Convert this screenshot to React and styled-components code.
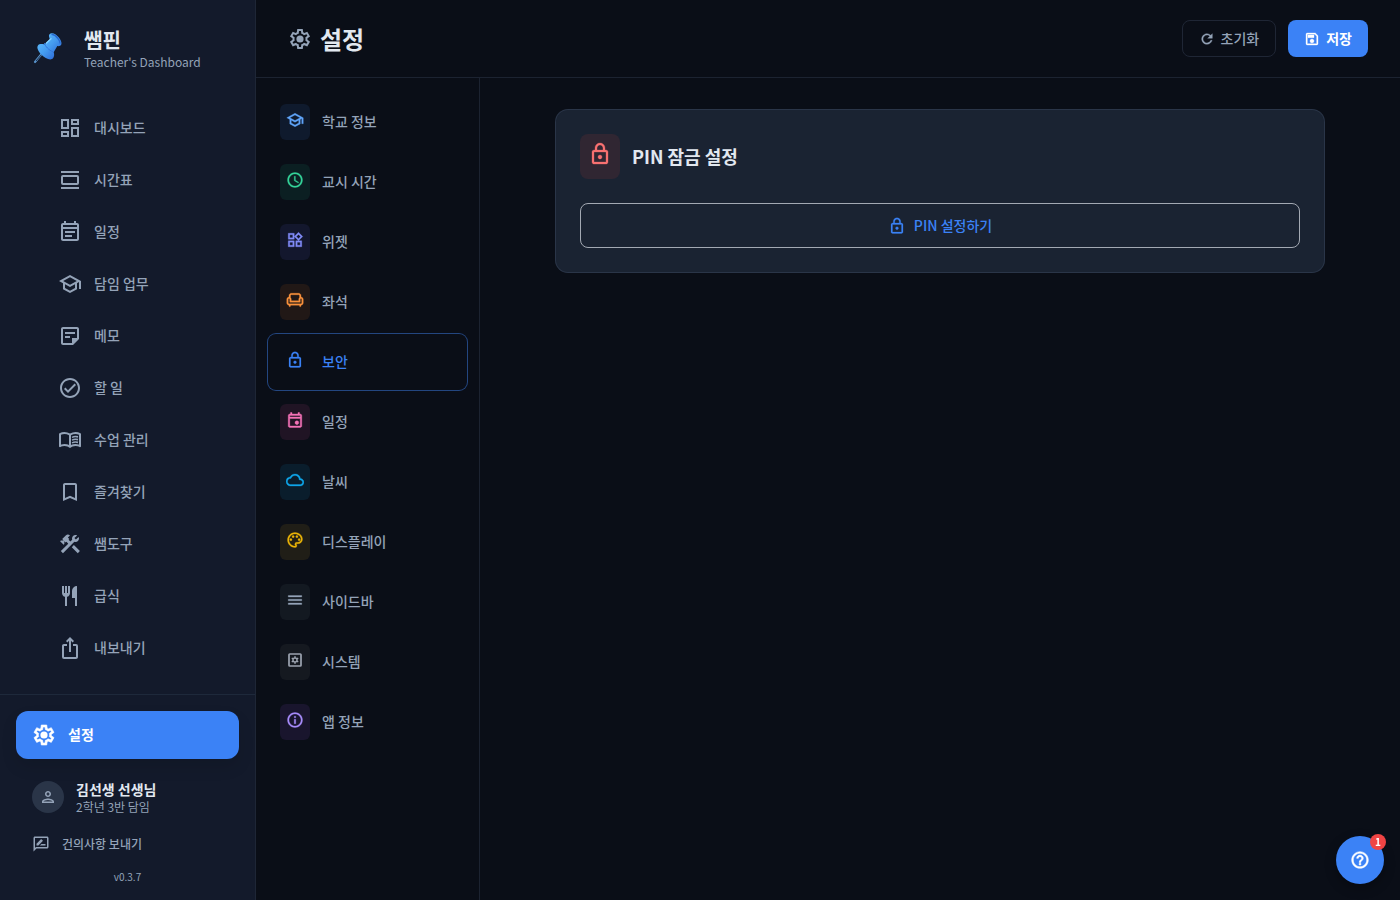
import React, { useState } from "react";
import styled, { createGlobalStyle } from "styled-components";
import {
  MdConstruction,
  MdHelpOutline,
  MdInfoOutline,
  MdMenu,
  MdOutlineBookmarkBorder,
  MdOutlineChair,
  MdOutlineCheckCircle,
  MdOutlineCloud,
  MdOutlineDashboard,
  MdOutlineEventNote,
  MdOutlineIosShare,
  MdOutlinePalette,
  MdOutlinePerson,
  MdOutlineRateReview,
  MdOutlineSave,
  MdOutlineSchedule,
  MdOutlineSchool,
  MdOutlineStickyNote2,
  MdOutlineWidgets,
  MdRefresh,
} from "react-icons/md";

const GlobalStyle = createGlobalStyle`
  * {
    box-sizing: border-box;
  }
  body {
    margin: 0;
    background-color: #0a0e17;
    color: #e2e8f0;
    font-family: "Noto Sans CJK KR", "Noto Sans", sans-serif;
    font-size: 14px;
    line-height: 20px;
  }
  button {
    font: inherit;
    cursor: pointer;
  }
  a {
    color: inherit;
    text-decoration: none;
  }
  svg {
    display: block;
    flex-shrink: 0;
  }
  /* the empty bounding path that the icons carry */
  path[fill="none"][d^="M0 0"] {
    stroke: none;
  }
`;

const Page = styled.div`
  display: flex;
  min-height: 100vh;
`;
const Sidebar = styled.aside`
  width: 256px;
  flex-shrink: 0;
  display: flex;
  flex-direction: column;
  background-color: #131a2b;
  border-right: 1px solid #1e2636;
`;
const Brand = styled.div`
  display: flex;
  align-items: center;
  gap: 12px;
  padding: 24px;
`;
const BrandName = styled.h1`
  margin: 0;
  font-size: 20px;
  line-height: 28px;
  font-weight: 700;
`;
const SmallText = styled.p`
  margin: 0;
  font-size: 12px;
  line-height: 16px;
  color: #94a3b8;
`;
const Nav = styled.nav`
  flex: 1;
  display: flex;
  flex-direction: column;
  gap: 4px;
  padding: 8px 16px;
`;
const Label = styled.span`
  padding-bottom: 2px;
`;
const NavLink = styled.a`
  display: flex;
  align-items: center;
  gap: 12px;
  padding: 12px 42px;
  font-weight: 500;
  color: #94a3b8;
`;
const SidebarFooter = styled.div`
  display: flex;
  flex-direction: column;
  padding: 16px;
  border-top: 1px solid #1e293b;
`;
const SettingsLink = styled.a`
  display: flex;
  align-items: center;
  gap: 12px;
  padding: 12px 16px;
  border-radius: 12px;
  background-color: #3b82f6;
  color: white;
  font-weight: 700;
  box-shadow: 0 8px 16px rgba(0, 0, 0, 0.1);

  svg {
    stroke-width: 0.6px;
  }
`;
const Profile = styled.div`
  display: flex;
  align-items: center;
  gap: 12px;
  padding: 20px 16px 12px;
`;
const Avatar = styled.div`
  width: 32px;
  height: 32px;
  display: flex;
  align-items: center;
  justify-content: center;
  border-radius: 50%;
  background-color: #2a3548;
  color: #94a3b8;
`;
const ProfileName = styled.p`
  margin: 0;
  font-weight: 700;
`;
const Feedback = styled.a`
  display: flex;
  align-items: center;
  gap: 12px;
  padding: 8px 16px;
  font-size: 12px;
  line-height: 18px;
  font-weight: 500;
  color: #94a3b8;
`;
const Version = styled.p`
  margin: 8px 0 0;
  font-size: 10px;
  line-height: 15px;
  text-align: center;
  color: #94a3b8;
`;

const Main = styled.main`
  flex: 1;
  min-width: 0;
  display: flex;
  flex-direction: column;
`;
const Header = styled.header`
  display: flex;
  align-items: center;
  justify-content: space-between;
  padding: 20px 32px;
  border-bottom: 1px solid #1c2331;
`;
const Title = styled.h2`
  display: flex;
  align-items: center;
  gap: 8px;
  margin: 0;
  font-size: 24px;
  line-height: 32px;
  font-weight: 700;

  svg {
    color: #94a3b8;
    stroke-width: 0;
  }
`;
const Actions = styled.div`
  display: flex;
  gap: 12px;
`;
const Button = styled.button`
  display: flex;
  align-items: center;
  gap: 6px;
  height: 37px;
  padding: 0 16px;
  border: ${(props) => (props.$primary ? "none" : "1px solid #1f2635")};
  border-radius: 8px;
  background-color: ${(props) => (props.$primary ? "#3b82f6" : "transparent")};
  color: ${(props) => (props.$primary ? "white" : "#94a3b8")};
  font-weight: ${(props) => (props.$primary ? 700 : 500)};

  svg {
    stroke-width: 0.5px;
  }
`;
const Body = styled.div`
  flex: 1;
  display: flex;
`;
const Tabs = styled.nav`
  width: 224px;
  flex-shrink: 0;
  display: flex;
  flex-direction: column;
  gap: 4px;
  padding: 16px 12px;
  border-right: 1px solid #1c2331;
`;
const Tab = styled.button`
  display: flex;
  align-items: center;
  gap: 12px;
  padding: 10px 12px;
  border: none;
  border-radius: 8px;
  background: none;
  color: ${(props) => (props.$active ? "#3b82f6" : "#94a3b8")};
  font-weight: 500;
  text-align: left;
  box-shadow: ${(props) => (props.$active ? "0 0 0 1px #234680" : "none")};
`;
const TabIcon = styled.span`
  display: flex;
  height: 36px;
  padding: 7px 6px;
  border-radius: 6px;
  color: ${(props) => props.$color};
  background-color: ${(props) => props.$bg};

  svg {
    stroke-width: 0.4px;
  }
`;
const Content = styled.section`
  flex: 1;
  min-width: 0;
  padding: 32px;
`;
const Card = styled.div`
  max-width: 768px;
  margin: 0 auto;
  padding: 24px;
  border-radius: 12px;
  background-color: #1a2332;
  box-shadow: 0 0 0 1px #2a3548;
`;
const CardHeader = styled.div`
  display: flex;
  align-items: center;
  gap: 12px;
  margin-bottom: 24px;
`;
const CardIcon = styled.span`
  display: flex;
  height: 45px;
  padding: 8px;
  border-radius: 8px;
  color: #f87171;
  background-color: #302632;
`;
const CardTitle = styled.h3`
  margin: 0;
  padding-bottom: 2px;
  font-size: 18px;
  line-height: 28px;
  font-weight: 700;
`;
const PinButton = styled.button`
  width: 100%;
  height: 45px;
  display: flex;
  align-items: center;
  justify-content: center;
  gap: 8px;
  border: 1px solid #a3a9b3;
  border-radius: 8px;
  background: none;
  color: #3b82f6;
  font-weight: 500;
`;
const HelpButton = styled.button`
  position: fixed;
  right: 16px;
  bottom: 16px;
  width: 48px;
  height: 48px;
  display: flex;
  align-items: center;
  justify-content: center;
  padding: 0;
  border: none;
  border-radius: 50%;
  background-color: #3b82f6;
  color: white;
  box-shadow: 0 4px 12px rgba(0, 0, 0, 0.3);

  svg {
    stroke-width: 0.6px;
  }
`;
const Badge = styled.span`
  position: absolute;
  top: -2px;
  right: -2px;
  width: 16px;
  height: 16px;
  border-radius: 50%;
  background-color: #ef4444;
  font-size: 10px;
  line-height: 16px;
  font-weight: 700;
  text-align: center;
`;

const PinLogo = () => (
  <svg width="48" height="48" viewBox="0 0 48 48" aria-hidden="true">
    <defs>
      <linearGradient id="pin" x1="0" y1="0" x2="1" y2="1">
        <stop offset="0" stopColor="#67c8ff" />
        <stop offset="0.5" stopColor="#459cf0" />
        <stop offset="1" stopColor="#2458cf" />
      </linearGradient>
    </defs>
    <path d="M18 29.500 11 38" stroke="#5791c8" strokeWidth="2.200" strokeLinecap="round" />
    <path d="M18 30 12 37" stroke="#17243c" strokeWidth="0.900" />
    <path
      d="M25 12.500c-.4-1.600.8-3.300 2.800-3.300 2.600 0 5.200 2 7 4.300 1.900 2.400 3.300 5.200 2.500 7-.6 1.500-2.300 1.800-4 1.600l-3.600 6.200c1 2.700.3 6-1.800 6.800-3 1.200-7.600-1.700-10.400-4.400-2.800-2.800-5.100-6.800-3.700-9 1.200-1.900 4.300-1.800 6.500-1.300l5.500-5.100z"
      fill="url(#pin)"
    />
    <path d="M27.500 10.600c1.800-.4 4.200 1.200 6 3.400 1.700 2.100 2.800 4.400 2.300 5.600" fill="none" stroke="#2868cf" strokeWidth="1.300" />
    <path d="M20.500 19c.4 3 4.400 7.400 8.700 8.800" fill="none" stroke="#3475dc" strokeWidth="1" />
    <path d="m22.500 19 4.500-4.200" stroke="#83d1ff" strokeWidth="1.400" strokeLinecap="round" />
  </svg>
);

const GlyphIcon = ({ size = 24, viewBox = "0 0 24 24", children }) => (
  <svg width={size} height={size} viewBox={viewBox} fill="currentColor" aria-hidden="true">
    {children}
  </svg>
);

// gear with a solid hub
const GearIcon = () => (
  <GlyphIcon>
    <path
      stroke="currentColor"
      d="M9.250 22l-.4-3.200q-.325-.125-.612-.3-.288-.175-.563-.375L4.700 19.375l-2.750-4.750 2.575-1.950q-.025-.175-.025-.337v-.675q0-.163.025-.338L1.950 9.375l2.750-4.750 2.975 1.250q.275-.2.575-.375t.6-.3l.4-3.200h5.500l.4 3.200q.325.125.612.3.288.175.563.375l2.975-1.250 2.750 4.750-2.575 1.950q.025.175.025.338v.675q0 .162-.05.337l2.575 1.950-2.750 4.750-2.950-1.250q-.275.200-.575.375t-.6.300l-.4 3.200zm1.750-2h1.975l.35-2.650q.775-.200 1.438-.587.662-.388 1.212-.938l2.475 1.025.975-1.700-2.150-1.625q.125-.350.175-.737.050-.388.050-.788t-.050-.787q-.050-.388-.175-.738l2.150-1.625-.975-1.700-2.475 1.050q-.550-.575-1.212-.963-.663-.387-1.438-.587L13 4h-1.975l-.350 2.650q-.775.200-1.437.587-.663.388-1.213.938L5.550 7.150l-.975 1.700 2.150 1.600q-.125.375-.175.750-.050.375-.050.800 0 .400.050.775t.175.750l-2.150 1.625.975 1.700 2.475-1.050q.550.575 1.213.963.662.387 1.437.587z"
    />
    <circle cx="12" cy="12" r="3.600" />
  </GlyphIcon>
);

const DayViewIcon = ({ size }) => (
  <GlyphIcon size={size}>
    <path d="M3 3h18v2H3zM3 19h18v2H3z" />
    <path d="M5 7h14a2 2 0 0 1 2 2v6a2 2 0 0 1-2 2H5a2 2 0 0 1-2-2V9a2 2 0 0 1 2-2zm0 2v6h14V9z" />
  </GlyphIcon>
);

const BookIcon = ({ size }) => (
  <GlyphIcon size={size} viewBox="0 -960 960 960">
    <path d="M260-320q47 0 91.500 10.500T440-278v-394q-41-24-87-36t-93-12q-36 0-71.500 7T120-692v396q35-12 69.500-18t70.500-6Zm260 42q44-21 88.500-31.500T700-320q36 0 70.500 6t69.500 18v-396q-33-14-68.500-21t-71.500-7q-47 0-93 12t-87 36v394Zm-40 118q-48-38-104-59t-116-21q-42 0-82.500 11T100-198q-21 11-40.500-1T40-234v-482q0-11 5.500-21T62-752q46-24 96-36t102-12q58 0 113.500 15T480-740q51-30 106.500-45T700-800q52 0 102 12t96 36q11 5 16.500 15t5.500 21v482q0 23-19.500 35t-40.500 1q-37-20-77.500-31T700-240q-60 0-116 21t-104 59Z" />
    <path
      d="M560-585q68-32 140-32 46 0 100 12M560-475q68-32 140-32 46 0 100 12M560-365q68-32 140-32 46 0 100 12"
      fill="none"
      stroke="currentColor"
      strokeWidth="62"
    />
  </GlyphIcon>
);

const MealIcon = ({ size }) => (
  <GlyphIcon size={size} viewBox="0 -960 960 960">
    <path d="M280-80v-366q-51-14-85.500-56T160-600v-280h80v280h40v-280h80v280h40v-280h80v280q0 56-34.500 98T360-446v366h-80Zm400 0v-320H560v-280q0-83 58.500-141.500T760-880v800h-80Z" />
  </GlyphIcon>
);

const EventIcon = ({ size }) => (
  <GlyphIcon size={size} viewBox="0 -960 960 960">
    <g stroke="currentColor" strokeWidth="20">
      <path d="M580-240q-42 0-71-29t-29-71q0-42 29-71t71-29q42 0 71 29t29 71q0 42-29 71t-71 29ZM200-80q-33 0-56.500-23.500T120-160v-560q0-33 23.500-56.500T200-800h40v-80h80v80h320v-80h80v80h40q33 0 56.500 23.500T840-720v560q0 33-23.500 56.500T760-80H200Zm0-80h560v-400H200v400Zm0-480h560v-80H200v80Z" />
    </g>
  </GlyphIcon>
);

const LockIcon = ({ size }) => (
  <GlyphIcon size={size} viewBox="0 -960 960 960">
    <g stroke="currentColor" strokeWidth="12">
      <path d="M240-80q-33 0-56.500-23.500T160-160v-400q0-33 23.500-56.500T240-640h40v-80q0-83 58.500-141.500T480-920q83 0 141.500 58.500T680-720v80h40q33 0 56.500 23.500T800-560v400q0 33-23.500 56.500T720-80H240Zm0-80h480v-400H240v400Zm240-120q33 0 56.500-23.500T560-360q0-33-23.500-56.500T480-440q-33 0-56.500 23.500T400-360q0 33 23.500 56.500T480-280ZM360-640h240v-80q0-50-35-85t-85-35q-50 0-85 35t-35 85v80Z" />
    </g>
  </GlyphIcon>
);

const SystemIcon = ({ size }) => (
  <GlyphIcon size={size}>
    <g fill="none" stroke="currentColor">
      <rect x="4" y="4" width="16" height="16" rx="1" strokeWidth="2.300" />
      <circle cx="12" cy="12" r="2.700" strokeWidth="1.800" />
      <path
        d="M12 9V7M12 17v-2M14.600 10.500l1.700-1M7.700 14.500l1.700-1M14.600 13.500l1.700 1M7.700 9.500l1.700 1"
        strokeWidth="2"
      />
    </g>
  </GlyphIcon>
);

const navItems = [
  { label: "대시보드", icon: MdOutlineDashboard },
  { label: "시간표", icon: DayViewIcon },
  { label: "일정", icon: MdOutlineEventNote },
  { label: "담임 업무", icon: MdOutlineSchool },
  { label: "메모", icon: MdOutlineStickyNote2 },
  { label: "할 일", icon: MdOutlineCheckCircle },
  { label: "수업 관리", icon: BookIcon },
  { label: "즐겨찾기", icon: MdOutlineBookmarkBorder },
  { label: "쌤도구", icon: MdConstruction },
  { label: "급식", icon: MealIcon },
  { label: "내보내기", icon: MdOutlineIosShare },
];

const tabItems = [
  { id: "school", label: "학교 정보", icon: MdOutlineSchool, color: "#60a5fa", bg: "#0f1a2d" },
  { id: "period", label: "교시 시간", icon: MdOutlineSchedule, color: "#34d399", bg: "#0b1f22" },
  { id: "widget", label: "위젯", icon: MdOutlineWidgets, color: "#818cf8", bg: "#13172d" },
  { id: "seat", label: "좌석", icon: MdOutlineChair, color: "#fb923c", bg: "#211816" },
  { id: "security", label: "보안", icon: LockIcon, color: "#3b82f6", bg: "transparent" },
  { id: "schedule", label: "일정", icon: EventIcon, color: "#f472b6", bg: "#201424" },
  { id: "weather", label: "날씨", icon: MdOutlineCloud, color: "#0ea5e9", bg: "#0a1d2c" },
  { id: "display", label: "디스플레이", icon: MdOutlinePalette, color: "#eab308", bg: "#201e17" },
  { id: "sidebar", label: "사이드바", icon: MdMenu, color: "#94a3b8", bg: "#131921" },
  { id: "system", label: "시스템", icon: SystemIcon, color: "#9ca3af", bg: "#151920" },
  { id: "about", label: "앱 정보", icon: MdInfoOutline, color: "#a78bfa", bg: "#19152d" },
];

const App = () => {
  const [active, setActive] = useState("security");

  return (
    <Page>
      <GlobalStyle />
      <Sidebar>
        <Brand>
          <PinLogo />
          <div>
            <BrandName>쌤핀</BrandName>
            <SmallText>Teacher's Dashboard</SmallText>
          </div>
        </Brand>
        <Nav>
          {navItems.map(({ label, icon: Icon }) => (
            <NavLink href="#" key={label}>
              <Icon size={24} />
              <Label>{label}</Label>
            </NavLink>
          ))}
        </Nav>
        <SidebarFooter>
          <SettingsLink href="#">
            <GearIcon />
            <Label>설정</Label>
          </SettingsLink>
          <Profile>
            <Avatar>
              <MdOutlinePerson size={18} />
            </Avatar>
            <div>
              <ProfileName>김선생 선생님</ProfileName>
              <SmallText>2학년 3반 담임</SmallText>
            </div>
          </Profile>
          <Feedback href="#">
            <MdOutlineRateReview size={18} />
            건의사항 보내기
          </Feedback>
          <Version>v0.3.7</Version>
        </SidebarFooter>
      </Sidebar>
      <Main>
        <Header>
          <Title>
            <GearIcon />
            설정
          </Title>
          <Actions>
            <Button type="button">
              <MdRefresh size={16} />
              <Label>초기화</Label>
            </Button>
            <Button type="button" $primary>
              <MdOutlineSave size={16} />
              <Label>저장</Label>
            </Button>
          </Actions>
        </Header>
        <Body>
          <Tabs>
            {tabItems.map(({ id, label, icon: Icon, color, bg }) => (
              <Tab type="button" key={id} $active={id === active} onClick={() => setActive(id)}>
                <TabIcon $color={color} $bg={bg}>
                  <Icon size={18} />
                </TabIcon>
                <Label>{label}</Label>
              </Tab>
            ))}
          </Tabs>
          <Content>
            <Card>
              <CardHeader>
                <CardIcon>
                  <LockIcon size={24} />
                </CardIcon>
                <CardTitle>PIN 잠금 설정</CardTitle>
              </CardHeader>
              <PinButton type="button">
                <LockIcon size={18} />
                <Label>PIN 설정하기</Label>
              </PinButton>
            </Card>
          </Content>
        </Body>
      </Main>
      <HelpButton type="button" aria-label="도움말">
        <MdHelpOutline size={20} />
        <Badge>1</Badge>
      </HelpButton>
    </Page>
  );
};

export default App;
